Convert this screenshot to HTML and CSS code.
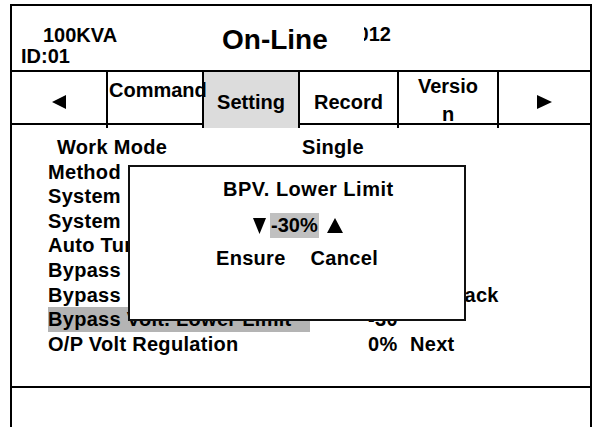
FILE: index.html
```html
<!DOCTYPE html>
<html lang="en">
    <head>
        <meta charset="UTF-8">
        <title>UPS Setting</title>
        <link rel="stylesheet" href="styles.css">
    </head>
    <body>
        <div class="screen">
            <div class="header">
                <div class="model">
                    <div class="kva">100KVA</div>
                    <div class="id">ID:01</div>
                </div>
                <div class="status">On-Line</div>
                <div class="clock"><span>2012</span></div>
            </div>

            <div class="tabs">
                <div class="tab">
                    <svg width="14" height="14" viewBox="0 0 14 14"><polygon points="0,7 14,0 14,14"/></svg>
                </div>
                <div class="tab tab-top">Command</div>
                <div class="tab active">Setting</div>
                <div class="tab">Record</div>
                <div class="tab tab-wrap">Versio<br>n</div>
                <div class="tab">
                    <svg width="15" height="14" viewBox="0 0 15 14"><polygon points="0,0 15,7 0,14"/></svg>
                </div>
            </div>

            <div class="content">
                <div class="mode-row">
                    <span class="mode-label">Work Mode</span>
                    <span>Single</span>
                </div>
                <div class="row"><span>Method&nbsp;&nbsp; Setup</span><span></span><span></span></div>
                <div class="row"><span>System&nbsp;&nbsp; Voltage</span><span>220V</span><span></span></div>
                <div class="row"><span>System&nbsp;&nbsp; Frequency</span><span>50Hz</span><span></span></div>
                <div class="row"><span>Auto Turn On</span><span>Yes</span><span></span></div>
                <div class="row"><span>Bypass&nbsp; Freq. Range</span><span>10%</span><span></span></div>
                <div class="row"><span>Bypass&nbsp; Freq.</span><span></span><span class="shift">Track</span></div>
                <div class="row"><span class="selected">Bypass Volt. Lower Limit</span><span>-30</span><span></span></div>
                <div class="row"><span>O/P Volt Regulation</span><span>0%</span><span>Next</span></div>

                <div class="dialog">
                    <div class="dialog-title">BPV. Lower Limit</div>
                    <div class="adjust">
                        <svg width="13" height="16" viewBox="0 0 13 16"><polygon points="0,0 13,0 6.5,16"/></svg>
                        <span class="adjust-value">-30%</span>
                        <svg width="16" height="15" viewBox="0 0 16 15"><polygon points="8,0 16,15 0,15"/></svg>
                    </div>
                    <div class="dialog-buttons">
                        <span>Ensure</span>
                        <span>Cancel</span>
                    </div>
                </div>
            </div>

            <div class="footer"></div>
        </div>
    </body>
</html>
```

FILE: styles.css
```css
body {
    font-family: 'Liberation Sans', Arial, sans-serif;
    font-weight: bold;
    margin: 0;
    padding: 0;
    background-color: white;
    color: #000;
    overflow: hidden;
}
.screen {
    box-sizing: border-box;
    margin: 4px 0 0 10px;
    width: 582px;
    height: 423px;
    border: 2px solid #000;
    border-bottom: none;
    display: flex;
    flex-direction: column;
}

/* header */
.header {
    height: 64px;
    border-bottom: 2px solid #000;
    display: flex;
    align-items: flex-start;
}
.model {
    width: 210px;
    padding-top: 19px;
    font-size: 20px;
    line-height: 21px;
    padding-left: 9px;
    box-sizing: border-box;
}
.kva {
    padding-left: 22px;
}
.status {
    width: 142px;
    padding-top: 19px;
    font-size: 28px;
    line-height: 30px;
}
.clock {
    width: 27px;
    overflow: hidden;
    display: flex;
    justify-content: flex-end;
    white-space: nowrap;
    padding-top: 18px;
    font-size: 20px;
    line-height: 20px;
}

/* tabs */
.tabs {
    height: 51px;
    border-bottom: 2px solid #000;
    display: grid;
    grid-template-columns: 94px 96px 96px 99px 100px 1fr;
    font-size: 20px;
    line-height: 23px;
}
.tab {
    display: flex;
    align-items: center;
    justify-content: center;
    text-align: center;
    padding-top: 4px;
    box-sizing: border-box;
    border-left: 2px solid #000;
}
.tab:first-child {
    border-left: none;
}
.tab-top {
    position: relative;
    z-index: 1;
    align-items: flex-start;
    justify-content: flex-start;
    padding: 7px 0 0 1px;
    white-space: nowrap;
}
.tab-wrap {
    line-height: 28px;
    padding-top: 0;
}
.active {
    background-color: #dcdcdc;
}

/* content */
.content {
    position: relative;
    height: 263px;
    border-bottom: 2px solid #000;
    padding: 10px 0 0 36px;
    box-sizing: border-box;
    font-size: 20px;
    line-height: 24.6px;
    letter-spacing: 0.3px;
}
.mode-row {
    display: grid;
    grid-template-columns: 245px 1fr;
    padding-left: 9px;
}
.row {
    display: grid;
    grid-template-columns: 320px 42px 1fr;
    white-space: nowrap;
}
.selected {
    justify-self: start;
    background-color: #b4b4b4;
    padding-right: 18px;
}
.shift {
    margin-left: 35px;
}

/* dialog */
.dialog {
    position: absolute;
    left: 116px;
    top: 40px;
    width: 338px;
    height: 156px;
    box-sizing: border-box;
    border: 2px solid #111;
    background-color: white;
    line-height: 23px;
}
.dialog-title {
    padding: 11px 0 0 93px;
    letter-spacing: 0.5px;
}
.adjust {
    display: flex;
    align-items: center;
    margin: 12px 0 0 123px;
    height: 25px;
}
.adjust-value {
    background-color: #c0c0c0;
    line-height: 25px;
    padding: 0 1px;
    margin: 0 8px 0 4px;
    letter-spacing: 0;
}
.dialog-buttons {
    display: flex;
    gap: 25px;
    margin: 9px 0 0 86px;
}

.footer {
    flex: 1;
}
```
